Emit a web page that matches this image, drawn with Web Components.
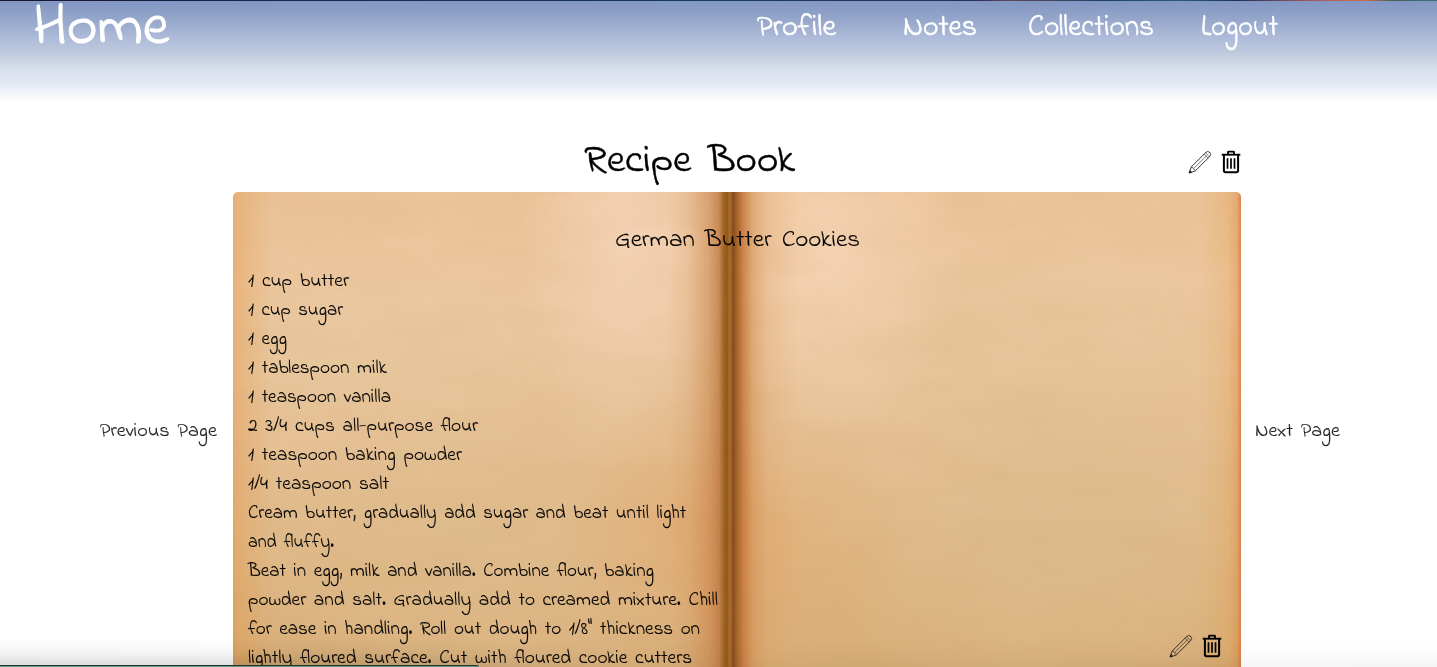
<!DOCTYPE html>
<html lang="en"><head><meta charset="utf-8"><title>Recipe Book</title>
<style>html,body{margin:0;height:667px;overflow:hidden;background:#fff}body{font-family:"Indie Flower",Lato,sans-serif;color:#000}</style>
</head><body><recipe-app></recipe-app>
<script>
const define=(name,html,ready)=>customElements.define(name,class extends HTMLElement{
  constructor(){super();this.attachShadow({mode:'open'}).innerHTML=html;}
  connectedCallback(){if(ready)ready.call(this);}
});
// A line of lettering condensed or widened to its given measure.
define('ink-text',`<style>:host{display:block;white-space:nowrap;line-height:inherit}span{display:inline-block;transform-origin:0 50%;word-spacing:.15em;font-variant-ligatures:none;-webkit-text-stroke:var(--ink,.15px) currentColor}</style><span><slot></slot></span>`,function(){
  const w=+this.getAttribute('measure'),s=this.shadowRoot.querySelector('span');
  this.style.width=w+'px';
  s.style.transform=`scaleX(${w/s.getBoundingClientRect().width})`;
});
define('pencil-icon',`<style>:host{display:block;width:24px;height:24px}svg{display:block}</style>
<svg width="24" height="24" viewBox="0 0 24 24" fill="none" stroke="#222" stroke-width=".9" stroke-linejoin="round"><path d="M1.2 23 3.2 17 17.6 2.6Q19.6.6 21.7 2.3Q23.7 4.5 21.7 6.6L7.2 21Z"/><path d="M3.2 17 5 17.6 5.4 19 6.8 19.3 7.2 21M16 4.2l4.1 4M17.4 2.8l4.1 4M6 18.2 18.4 5.9" stroke-width=".6"/><path d="M1.2 23 1.9 20.6 3.6 22.2Z" fill="#222"/></svg>`);
define('trash-icon',`<style>:host{display:block;width:20px;height:24px}svg{display:block}</style>
<svg width="20" height="24" viewBox="0 0 20 24" fill="none" stroke="#000" stroke-width="2"><path d="M.7 4.7h18.6" stroke-width="1.9"/><path d="M7 4V2Q7 1.6 7.6 1.6h4.8Q13 1.6 13 2V4" stroke-width="1.8"/><path d="M2.9 5v15.6Q2.9 22.3 4.6 22.3h10.8Q17.1 22.3 17.1 20.6V5"/><path d="M6.5 8.3v10.5M10 8.3v10.5M13.5 8.3v10.5" stroke-width="1.7"/></svg>`);
define('edit-tools',`<style>:host{display:flex;gap:9px}</style><pencil-icon></pencil-icon><trash-icon></trash-icon>`);
define('site-header',`<style>
:host{display:flex;align-items:flex-start;box-sizing:border-box;height:104px;padding-left:33px;color:#fff;
background:linear-gradient(90deg,#181630,#172c57 28%,#173a67 50%,#27315c 68%,#624857 70%,#1e4264 77%,#2d5c70 82%,#19345c 86%,#9d5961 91%,#cf704c 95%,#42604f 97%,#397073 99%) 0 0/100% 1px no-repeat,linear-gradient(#8296c3 1px,#91a3c8 16px,#aebbd9 38px,#bdc9dd 52px,#d9dfec 70px,#e6eaf4 85px,#f5f7fa 95px,#fff 103px)}
.home{font-size:58px;line-height:60px;margin-top:-1px;--ink:1.1px}
nav{display:flex;margin-left:588px;margin-top:8px;font-size:30px;line-height:40px;--ink:.6px}
</style><ink-text class="home" measure="136">Home</ink-text>
<nav><ink-text measure="79">Profile</ink-text><ink-text measure="74" style="margin-left:67px">Notes</ink-text><ink-text measure="126" style="margin-left:51px">Collections</ink-text><ink-text measure="77" style="margin-left:47px">Logout</ink-text></nav>`);
define('book-spread',`<style>
:host{display:flex;flex-direction:column;box-sizing:border-box;position:relative;width:1008px;height:487px;padding:32px 15px 0;border-radius:5px 5px 0 0;overflow:hidden;
background:
linear-gradient(90deg,rgba(226,140,60,.4),rgba(228,145,60,.3) 4px,transparent 40px,transparent 965px,rgba(228,148,55,.2) 995px,rgba(222,125,45,.35) 1004px,rgba(215,95,40,.65)),
linear-gradient(90deg,transparent 435px,rgba(205,130,70,.15) 455px,rgba(197,120,60,.45) 475px,rgba(185,112,56,.7) 486px,#a5682c 490px,#91560f 494px,#a46c34 496.5px,#9a6630 498px,#8a4b15 500px,#a5642c 504px,rgba(195,115,52,.8) 510px,rgba(210,140,78,.5) 520px,rgba(222,155,98,.22) 535px,transparent 565px),
radial-gradient(ellipse 110px 190px at 395px 45px,rgba(248,218,195,.65),transparent),
radial-gradient(ellipse 130px 190px at 600px 55px,rgba(248,216,186,.75),transparent),
radial-gradient(ellipse 240px 80px at 140px 160px,rgba(230,200,158,.65),transparent),
radial-gradient(ellipse 230px 100px at 755px 150px,rgba(226,196,151,.75),transparent),
radial-gradient(ellipse 120px 130px at 445px 335px,rgba(227,163,104,.45),transparent),
radial-gradient(ellipse 130px 150px at 550px 360px,rgba(226,166,106,.4),transparent),
radial-gradient(ellipse 240px 190px at 830px 350px,rgba(220,188,141,.85),transparent),
radial-gradient(ellipse 220px 190px at 240px 370px,rgba(222,188,141,.75),transparent),
linear-gradient(#ebc499,#ecc8a0 22%,#e6c297 48%,#e0ba8a 72%,#d7ad77)}
svg{position:absolute;inset:0;opacity:.055;pointer-events:none}
.title{align-self:center;font-size:24.5px;line-height:32px;position:relative}
.recipe{margin-top:11px;font-size:20px;line-height:29px;position:relative}
edit-tools{position:absolute;right:19px;bottom:21px}
</style><svg width="1008" height="487"><filter id="grain" x="0" y="0" width="100%" height="100%"><feTurbulence type="fractalNoise" baseFrequency=".012 .03" numOctaves="4" seed="8"/><feColorMatrix values="0 0 0 0 .55  0 0 0 0 .28  0 0 0 0 .08  2.2 0 0 0 -.65"/></filter><rect width="1008" height="487" filter="url(#grain)"/></svg>
<ink-text class="title" measure="245">German Butter Cookies</ink-text>
<div class="recipe">
<ink-text measure="101">1 cup butter</ink-text><ink-text measure="95">1 cup sugar</ink-text><ink-text measure="39">1 egg</ink-text><ink-text measure="139">1 tablespoon milk</ink-text><ink-text measure="143">1 teaspoon vanilla</ink-text><ink-text measure="230">2 3/4 cups all-purpose flour</ink-text><ink-text measure="214">1 teaspoon baking powder</ink-text><ink-text measure="141">1/4 teaspoon salt</ink-text><ink-text measure="438">Cream butter, gradually add sugar and beat until light</ink-text><ink-text measure="86">and fluffy.</ink-text><ink-text measure="406">Beat in egg, milk and vanilla. Combine flour, baking</ink-text><ink-text measure="470">powder and salt. Gradually add to creamed mixture. Chill</ink-text><ink-text measure="452">for ease in handling. Roll out dough to 1/8" thickness on</ink-text><ink-text measure="444">lightly floured surface. Cut with floured cookie cutters</ink-text>
</div><edit-tools></edit-tools>`);
define('recipe-app',`<style>
:host{display:block;width:1437px;height:667px;overflow:hidden;position:relative}
.heading{display:flex;align-items:center;height:88px;box-sizing:border-box;padding-left:584px}
.heading ink-text{font-size:40px;line-height:48px;margin-top:28px;--ink:.5px}
.heading edit-tools{margin-left:393px;margin-top:28px}
main{display:flex;align-items:flex-start}
.prev,.next{font-size:20px;line-height:28px;margin-top:226px;color:#222}
.prev{margin-left:100px;margin-right:16px}.next{margin-left:14px}
.shade{position:absolute;left:0;right:0;bottom:0;height:28px;background:linear-gradient(90deg,rgba(0,0,0,.15),rgba(0,0,0,.13) 400px,rgba(0,0,0,.02) 600px,rgba(0,0,0,.04));mask-image:linear-gradient(transparent,rgba(0,0,0,.3) 50%,#000)}
.status{position:absolute;left:0;bottom:0;width:479px;height:2px;box-sizing:border-box;background:#5e9c87;border-top:1px solid #25352d;border-radius:0 2px 0 0}
</style><site-header></site-header><div class="heading"><ink-text measure="211">Recipe Book</ink-text><edit-tools></edit-tools></div>
<main><ink-text class="prev" measure="117">Previous Page</ink-text><book-spread></book-spread><ink-text class="next" measure="85">Next Page</ink-text></main><div class="shade"></div><div class="status"></div>`);
</script></body></html>
